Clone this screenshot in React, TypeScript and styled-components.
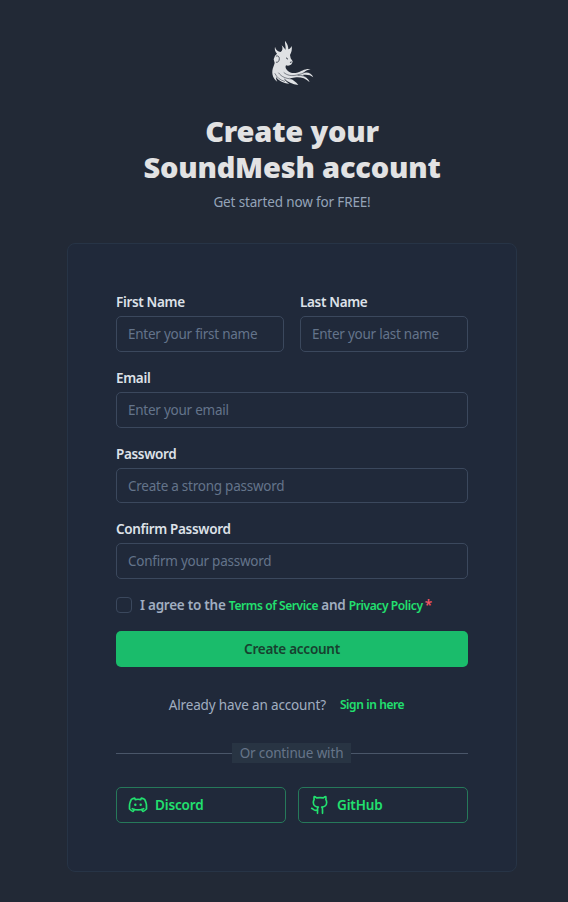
import React from "react";
import styled, { createGlobalStyle } from "styled-components";
import { Github } from "lucide-react";

const GlobalStyle = createGlobalStyle`
  *, *::before, *::after { box-sizing: border-box; }
  body {
    margin: 0;
    background: #222936;
    font-family: "Noto Sans", "Open Sans", sans-serif;
    font-size: 13.5px;
    line-height: 21.7px;
    color: #dfe2e6;
  }
  h1, p { margin: 0; }
`;

const Page = styled.main`
  min-height: 902px;
  padding: 34px 51px 0 67px;
  display: flex;
  flex-direction: column;
  align-items: center;
`;

const Logo = styled.svg`
  width: 60px;
  height: 60px;
  display: block;
  fill: #dfe1e4;
`;

const Title = styled.h1`
  margin-top: 19px;
  width: 340px;
  text-align: center;
  font-size: 29px;
  font-weight: 900;
  line-height: 36px;
  color: #e2e2e3;
  letter-spacing: -0.2px;
`;

const Subtitle = styled.p`
  margin-top: 6px;
  line-height: 22px;
  color: #94a3b8;
  letter-spacing: -0.15px;
`;

const Card = styled.section`
  margin-top: 30px;
  width: 450px;
  height: 629px;
  padding: 48.4px 48px 48px;
  border: 1px solid #273446;
  border-radius: 8px;
  background: #20293a;
`;

const Form = styled.form`
  display: flex;
  flex-direction: column;
  gap: 16px;
`;

const NameRow = styled.div`
  display: grid;
  grid-template-columns: 1fr 1fr;
  gap: 16px;
`;

const Field = styled.label`
  display: flex;
  flex-direction: column;
  gap: 2px;
  min-width: 0;
`;

const FieldLabel = styled.span`
  height: 21.8px;
  line-height: 20px;
  font-weight: 600;
  color: #dde1e8;
  letter-spacing: -0.33px;
`;

const Input = styled.input`
  width: 100%;
  height: 35.9px;
  padding: 0 11px;
  border: 1px solid #3b485d;
  border-radius: 5px;
  background: transparent;
  color: #dde1e8;
  font: inherit;
  letter-spacing: -0.25px;
  outline: none;
  &::placeholder { color: #64748b; opacity: 1; }
`;

const Terms = styled.div`
  display: flex;
  align-items: center;
  height: 19.6px;
`;

const Checkbox = styled.input`
  appearance: none;
  width: 16px;
  height: 16px;
  margin: 0 8px 0 0;
  border: 1px solid #3b485d;
  border-radius: 4px;
`;

const TermsText = styled.span`
  padding-top: 2px;
  font-weight: 600;
  color: #a0aec0;
  white-space: pre;
  letter-spacing: -0.25px;
`;

const Link = styled.a`
  font-size: 12px;
  font-weight: 600;
  color: #22e06f;
  text-decoration: none;
  letter-spacing: -0.4px;
`;

const Required = styled.span`
  margin-left: 2px;
  color: #f25563;
`;

const Submit = styled.button`
  height: 36px;
  padding: 2px 0 0;
  border: 0;
  border-radius: 5px;
  background: #1abc6b;
  color: #17412f;
  font: inherit;
  font-weight: 600;
  letter-spacing: -0.25px;
`;

const SignIn = styled.p`
  margin-top: 27px;
  height: 22px;
  line-height: 22px;
  display: flex;
  justify-content: center;
  align-items: center;
  gap: 14px;
  padding: 1px 11px 0 0;
  color: #a0aec0;
  letter-spacing: -0.15px;
`;

const Divider = styled.div`
  margin-top: 27px;
  height: 20px;
  display: flex;
  align-items: flex-start;
  &::before, &::after {
    content: "";
    height: 1px;
    margin-top: 10px;
    background: #4a5669;
  }
  &::before { width: 116px; }
  &::after { flex: 1; }
`;

const DividerLabel = styled.span`
  width: 119px;
  height: 20px;
  line-height: 20px;
  text-align: center;
  background: #283443;
  color: #667489;
  letter-spacing: -0.15px;
`;

const Providers = styled.div`
  margin-top: 24px;
  display: grid;
  grid-template-columns: 1fr 1fr;
  gap: 12px;
`;

const ProviderButton = styled.button`
  height: 36px;
  padding: 0 11px;
  display: flex;
  align-items: center;
  gap: 7px;
  border: 1px solid #26795a;
  border-radius: 5px;
  background: transparent;
  color: #22e06f;
  font: inherit;
  font-weight: 600;
  letter-spacing: -0.15px;
`;

const ProviderName = styled.span`
  padding-top: 2px;
`;

const fields = [
  { label: "Email", placeholder: "Enter your email", type: "email" },
  { label: "Password", placeholder: "Create a strong password", type: "password" },
  { label: "Confirm Password", placeholder: "Confirm your password", type: "password" },
];

function WolfLogo() {
  return (
    <Logo viewBox="0 0 180 180" aria-label="SoundMesh">
      <path d="M39 38 C41 48 48 53 56 54 C62 50 63 43 59 34 C66 40 69 45 70 48 C73 40 68 31 69 20 C76 29 79 37 79 46 C83 45 86 42 89 36 C91 47 88 56 84 63 L86 73 L92 82 C91 90 86 95 78 95 L72 94 C69 99 71 105 77 110 C84 116 92 119 105 116 C118 112 128 103 146 105 C137 107 129 112 123 117 C136 113 149 117 154 130 C145 122 134 121 121 123 C131 127 139 134 143 145 C132 134 119 130 107 130 C99 130 91 134 82 131 C92 138 102 142 109 153 C91 151 77 145 66 133 C69 140 74 145 82 149 C63 148 49 139 42 129 C42 134 43 138 46 143 C30 132 28 113 34 99 C36 94 37 90 38 87 L35 76 L39 65 L45 59 C40 54 37 46 39 38Z" />
      <g fill="none" stroke="#222936" strokeLinecap="round">
        <path d="M43 66c5-2 9 2 9 8 0 7-4 12-9 11" strokeWidth="2.2" />
        <path d="M73 72l4 3M85 85l3-1" strokeWidth="2.8" />
        <path d="M39 119c6 12 15 19 29 23M50 117c9 12 22 17 39 18M66 116c9 8 22 11 39 7 10-2 19-5 26-9M108 124c12-1 23 3 31 11" strokeWidth="1.6" />
      </g>
    </Logo>
  );
}

function DiscordIcon() {
  return (
    <svg width="20" height="20" viewBox="0 0 60 60" fill="none" stroke="currentColor" strokeWidth="5" strokeLinecap="round" strokeLinejoin="round" aria-hidden="true">
      <path d="M22 14c5-1.5 11-1.5 16 0M22 14l-2-4.500c-4 .6-7 1.800-10 3.700C6 20 3.500 29 4.500 42c4 4 7 6 10.500 7.500l5-6M38 14l2-4.500c4 .6 7 1.800 10 3.700C54 20 56.500 29 55.500 42c-4 4-7 6-10.500 7.500l-5-6M13 41c10 4.500 24 4.500 34 0" />
      <circle cx="22" cy="29" r="3.700" fill="currentColor" stroke="none" />
      <circle cx="38" cy="29" r="3.700" fill="currentColor" stroke="none" />
    </svg>
  );
}

export default function App() {
  return (
    <>
      <GlobalStyle />
      <Page>
        <WolfLogo />
        <Title>Create your<br />SoundMesh account</Title>
        <Subtitle>Get started now for FREE!</Subtitle>
        <Card>
          <Form onSubmit={(e) => e.preventDefault()}>
            <NameRow>
              <Field>
                <FieldLabel>First Name</FieldLabel>
                <Input placeholder="Enter your first name" />
              </Field>
              <Field>
                <FieldLabel>Last Name</FieldLabel>
                <Input placeholder="Enter your last name" />
              </Field>
            </NameRow>
            {fields.map((f) => (
              <Field key={f.label}>
                <FieldLabel>{f.label}</FieldLabel>
                <Input type={f.type} placeholder={f.placeholder} />
              </Field>
            ))}
            <Terms>
              <Checkbox type="checkbox" aria-label="Agree to terms" />
              <TermsText>
                I agree to the <Link href="#">Terms of Service</Link> and <Link href="#">Privacy Policy</Link>
                <Required>*</Required>
              </TermsText>
            </Terms>
            <Submit type="submit">Create account</Submit>
          </Form>
          <SignIn>
            Already have an account?
            <Link href="#">Sign in here</Link>
          </SignIn>
          <Divider>
            <DividerLabel>Or continue with</DividerLabel>
          </Divider>
          <Providers>
            <ProviderButton><DiscordIcon /><ProviderName>Discord</ProviderName></ProviderButton>
            <ProviderButton><Github size={20} /><ProviderName>GitHub</ProviderName></ProviderButton>
          </Providers>
        </Card>
      </Page>
    </>
  );
}
